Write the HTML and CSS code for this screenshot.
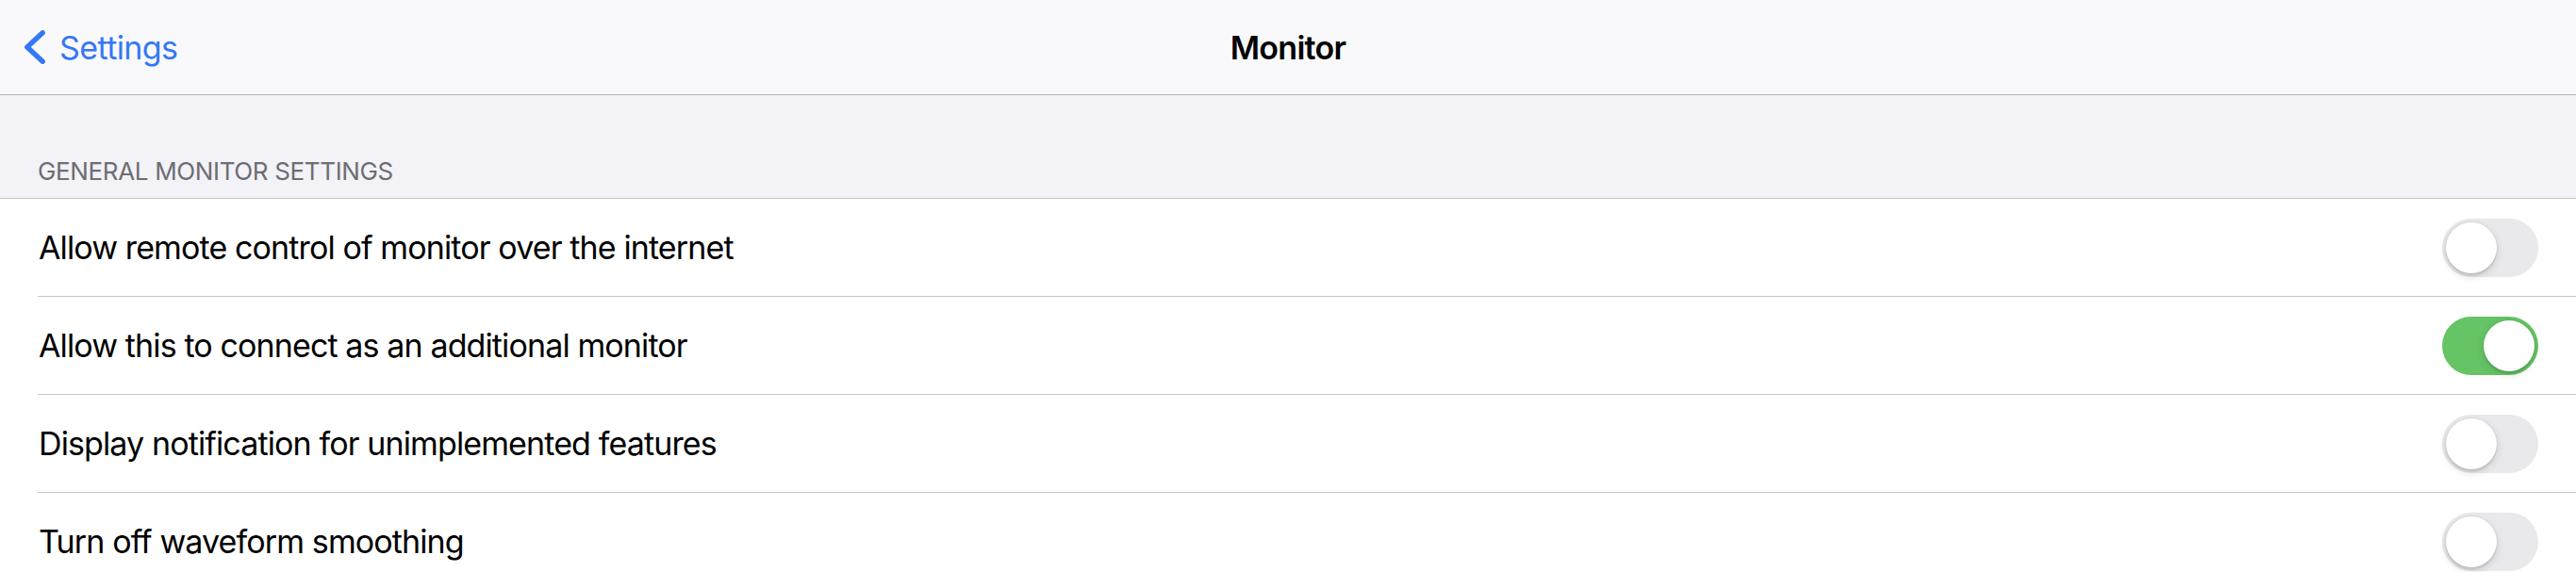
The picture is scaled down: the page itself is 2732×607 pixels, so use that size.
FILE: index.html
```html
<!DOCTYPE html>
<html lang="en">
<head>
<meta charset="utf-8">
<title>Monitor</title>
<link rel="stylesheet" href="styles.css">
</head>
<body>
<header class="navbar">
  <a class="back" href="#">
    <svg class="chevron" width="22" height="36" viewBox="0 0 22 36" aria-hidden="true">
      <path d="M19.2 2.8 L2.8 18 L19.2 33.2" fill="none" stroke="currentColor" stroke-width="5.4" stroke-linecap="round" stroke-linejoin="round"/>
    </svg>
    <span class="back-label">Settings</span>
  </a>
  <h1 class="title">Monitor</h1>
  <div class="spacer"></div>
</header>
<main class="content">
  <div class="section-header">GENERAL MONITOR SETTINGS</div>
  <ul class="list">
    <li class="row"><span class="label">Allow remote control of monitor over the internet</span><span class="switch"><span class="thumb"></span></span></li>
    <li class="row"><span class="label">Allow this to connect as an additional monitor</span><span class="switch on"><span class="thumb"></span></span></li>
    <li class="row"><span class="label">Display notification for unimplemented features</span><span class="switch"><span class="thumb"></span></span></li>
    <li class="row"><span class="label">Turn off waveform smoothing</span><span class="switch"><span class="thumb"></span></span></li>
  </ul>
</main>
</body>
</html>
```
FILE: styles.css
```css
* { box-sizing: border-box; }
html, body {
  margin: 0;
  padding: 0;
  background: #f2f2f7;
  font-family: Inter, "Liberation Sans", sans-serif;
  color: #000;
  overflow: hidden;
}
.navbar {
  height: 101px;
  background: #f9f9fb;
  border-bottom: 1px solid #b3b3b6;
  display: grid;
  grid-template-columns: 1fr auto 1fr;
  align-items: center;
}
.back {
  display: flex;
  align-items: center;
  padding-left: 26px;
  color: #3478f6;
  text-decoration: none;
  font-size: 34px;
  letter-spacing: -0.6px;
}
.chevron { display: block; margin-right: 15px; }
.title {
  margin: 0;
  font-size: 34px;
  font-weight: 600;
  letter-spacing: -0.7px;
}
.section-header {
  height: 110px;
  padding: 0 0 13px 40px;
  display: flex;
  align-items: flex-end;
  font-size: 26px;
  color: #6d6d72;
  letter-spacing: -0.35px;
  border-bottom: 1px solid #c6c6c8;
}
.list {
  list-style: none;
  margin: 0;
  padding: 0 0 0 40px;
  background: #fff;
}
.row {
  height: 104px;
  display: flex;
  align-items: center;
  justify-content: space-between;
  padding: 0 40px 0 1px;
  border-bottom: 1px solid #c6c6c8;
  font-size: 34px;
  letter-spacing: -0.88px;
}
.switch {
  width: 102px;
  height: 62px;
  border-radius: 31px;
  background: #e9e9eb;
  display: flex;
  align-items: center;
  padding: 0 4px;
}
.switch.on {
  background: #65c466;
  justify-content: flex-end;
}
.thumb {
  width: 54px;
  height: 54px;
  border-radius: 50%;
  background: #fff;
  box-shadow: 0 3px 8px rgba(0,0,0,0.15), 0 3px 1px rgba(0,0,0,0.06), 0 0 0 1px rgba(0,0,0,0.04);
}
```
